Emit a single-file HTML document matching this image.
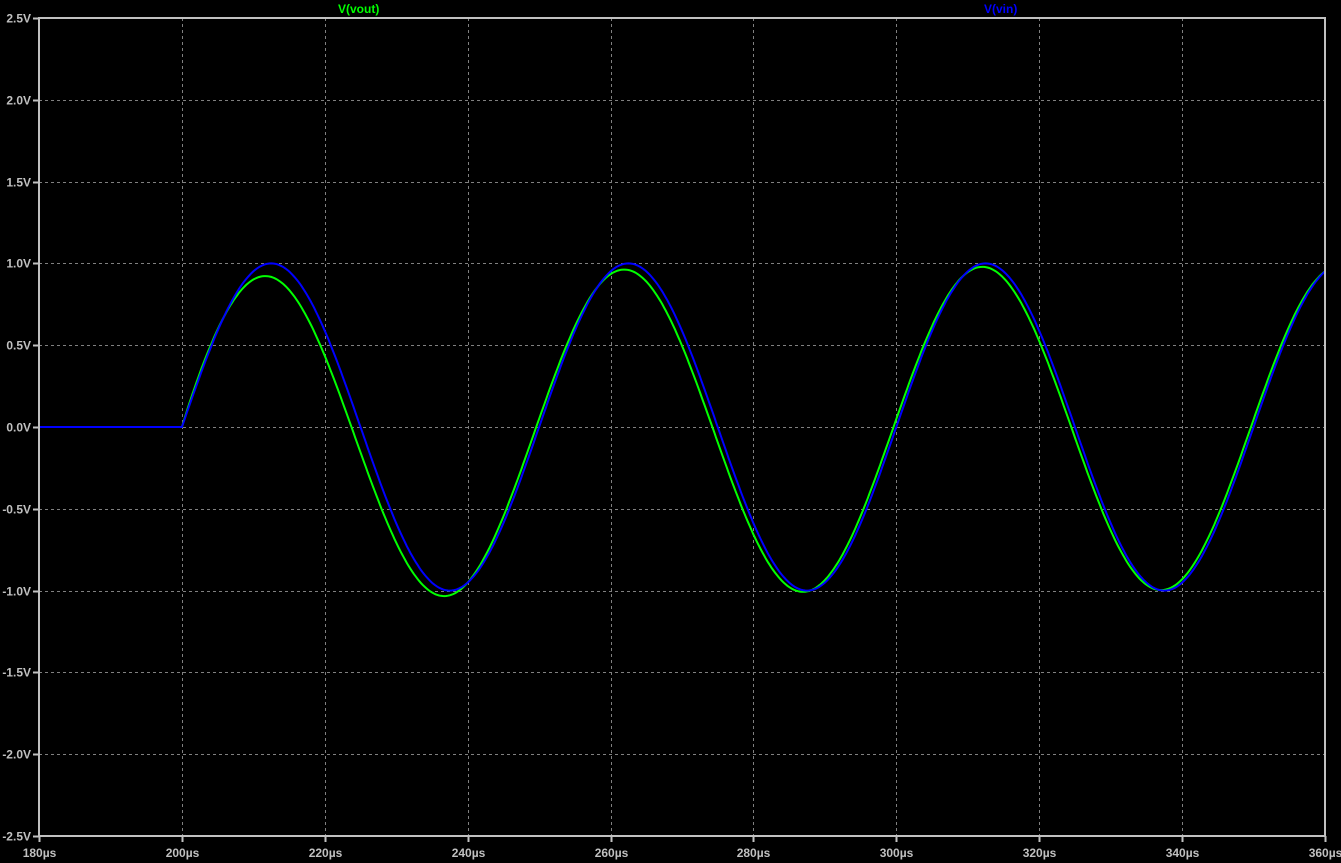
<!DOCTYPE html>
<html><head><meta charset="utf-8"><style>
html,body{margin:0;padding:0;background:#000;width:1341px;height:863px;overflow:hidden}
svg{display:block}
text{font-family:"Liberation Sans",sans-serif;font-size:12px;font-weight:bold}
</style></head><body>
<svg id="s" width="1341" height="863" xmlns="http://www.w3.org/2000/svg">
<g id="grid" stroke="#808080" stroke-width="1" stroke-dasharray="3,3"></g>
<g id="lab" fill="#c0c0c0"></g>
<path id="vo" fill="none" stroke="#00ff00" stroke-width="2"/>
<path id="vi" fill="none" stroke="#0000ff" stroke-width="2"/>
<line x1="39" y1="18" x2="1326" y2="18" stroke="#c0c0c0" stroke-width="2"/>
<line x1="39" y1="836" x2="1326" y2="836" stroke="#c0c0c0" stroke-width="2"/>
<line x1="39" y1="17" x2="39" y2="837" stroke="#c0c0c0" stroke-width="2"/>
<line x1="1325" y1="17" x2="1325" y2="837" stroke="#c0c0c0" stroke-width="2"/>
<text x="338" y="13" fill="#00ff00">V(vout)</text>
<text x="984" y="13" fill="#0000ff">V(vin)</text>
</svg>
<script>
var X=function(t){return 39+(t-180)*(1286/180)};
var Y=function(v){return 427-v*163.6};
var ns="http://www.w3.org/2000/svg",g=document.getElementById('grid'),l=document.getElementById('lab');
function el(p,tag,a,txt){var e=document.createElementNS(ns,tag);for(var k in a)e.setAttribute(k,a[k]);if(txt)e.textContent=txt;p.appendChild(e);}
var vl=["2.5V","2.0V","1.5V","1.0V","0.5V","0.0V","-0.5V","-1.0V","-1.5V","-2.0V","-2.5V"];
for(var i=0;i<=10;i++){var y=Math.round(Y(2.5-i*0.5))+0.5;
 if(i>0&&i<10)el(g,'line',{x1:39,y1:y,x2:1325,y2:y});
 el(l,'line',{x1:33,y1:y,x2:39,y2:y,stroke:'#c0c0c0','stroke-width':2});
 el(l,'text',{x:31,y:y+4,'text-anchor':'end'},vl[i]);}
for(var t=180;t<=360;t+=20){var x=Math.round(X(t))+0.5;
 if(t>180&&t<360)el(g,'line',{x1:x,y1:18,x2:x,y2:836});
 el(l,'line',{x1:x,y1:836,x2:x,y2:842,stroke:'#c0c0c0','stroke-width':2});
 el(l,'text',{x:x,y:857,'text-anchor':'middle'},t+"\u00b5s");}
var w=2*Math.PI/50,di="",dv="";
for(var t=180;t<=360.01;t+=0.25){var vi=0,vo=0;
 if(t>200){var u=t-200;vi=Math.sin(w*u);
  var ld=0.3+0.7*Math.exp(-u/80);
  vo=0.99*Math.sin(w*(u+ld))-0.085*Math.exp(-u/55)*(1-Math.exp(-u/4)) - 0.99*Math.sin(w*ld)*Math.exp(-u/3);}
 di+=(di?"L":"M")+X(t).toFixed(1)+","+Y(vi).toFixed(1);
 dv+=(dv?"L":"M")+X(t).toFixed(1)+","+Y(vo).toFixed(1);}
document.getElementById('vi').setAttribute('d',di);
document.getElementById('vo').setAttribute('d',dv);
</script>
</body></html>
